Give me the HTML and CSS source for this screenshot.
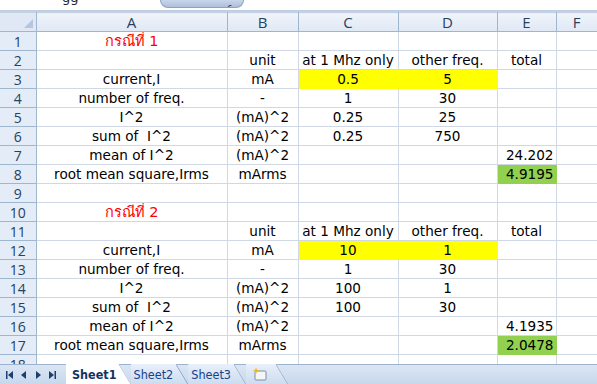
FILE: index.html
```html
<!DOCTYPE html>
<html lang="th">
<head>
    <meta charset="UTF-8">
    <title>Irms</title>
    <link rel="stylesheet" href="styles.css">
</head>
<body>
<div class="window">
    <div class="formula-bar">
        <div class="name-box"><span class="name-text">gg</span></div>
        <div class="fx-button"><span class="fx">fx</span></div>
    </div>
    <div class="sheet">
        <table class="grid">
            <colgroup>
                <col class="c-head"><col class="c-a"><col class="c-b"><col class="c-c"><col class="c-d"><col class="c-e"><col class="c-f">
            </colgroup>
            <thead>
                <tr>
                    <th class="corner"><span class="tri"></span></th>
                    <th>A</th><th>B</th><th>C</th><th>D</th><th>E</th><th>F</th>
                </tr>
            </thead>
            <tbody>
                <tr><th>1</th><td class="case">กรณีที่ 1</td><td></td><td></td><td></td><td></td><td></td></tr>
                <tr><th>2</th><td></td><td>unit</td><td>at 1 Mhz only</td><td>other freq.</td><td>total</td><td></td></tr>
                <tr><th>3</th><td>current,I</td><td>mA</td><td class="yellow">0.5</td><td class="yellow">5</td><td></td><td></td></tr>
                <tr><th>4</th><td>number of freq.</td><td>-</td><td>1</td><td>30</td><td></td><td></td></tr>
                <tr><th>5</th><td>I^2</td><td>(mA)^2</td><td>0.25</td><td>25</td><td></td><td></td></tr>
                <tr><th>6</th><td>sum of &nbsp;I^2</td><td>(mA)^2</td><td>0.25</td><td>750</td><td></td><td></td></tr>
                <tr><th>7</th><td>mean of I^2</td><td>(mA)^2</td><td></td><td></td><td class="num">24.202</td><td></td></tr>
                <tr><th>8</th><td>root mean square,Irms</td><td>mArms</td><td></td><td></td><td class="num green">4.9195</td><td></td></tr>
                <tr><th>9</th><td></td><td></td><td></td><td></td><td></td><td></td></tr>
                <tr><th>10</th><td class="case">กรณีที่ 2</td><td></td><td></td><td></td><td></td><td></td></tr>
                <tr><th>11</th><td></td><td>unit</td><td>at 1 Mhz only</td><td>other freq.</td><td>total</td><td></td></tr>
                <tr><th>12</th><td>current,I</td><td>mA</td><td class="yellow">10</td><td class="yellow">1</td><td></td><td></td></tr>
                <tr><th>13</th><td>number of freq.</td><td>-</td><td>1</td><td>30</td><td></td><td></td></tr>
                <tr><th>14</th><td>I^2</td><td>(mA)^2</td><td>100</td><td>1</td><td></td><td></td></tr>
                <tr><th>15</th><td>sum of &nbsp;I^2</td><td>(mA)^2</td><td>100</td><td>30</td><td></td><td></td></tr>
                <tr><th>16</th><td>mean of I^2</td><td>(mA)^2</td><td></td><td></td><td class="num">4.1935</td><td></td></tr>
                <tr><th>17</th><td>root mean square,Irms</td><td>mArms</td><td></td><td></td><td class="num green">2.0478</td><td></td></tr>
                <tr><th>18</th><td></td><td></td><td></td><td></td><td></td><td></td></tr>
            </tbody>
        </table>
    </div>
    <div class="tab-bar">
        <div class="nav">
            <svg width="66" height="20" viewBox="0 0 66 20">
                <rect x="6" y="6" width="1.5" height="8" fill="#1d3f6e"/>
                <path d="M13 6 L8 10 L13 14 Z" fill="#1d3f6e"/>
                <path d="M26 6 L21 10 L26 14 Z" fill="#1d3f6e"/>
                <path d="M36 6 L41 10 L36 14 Z" fill="#1d3f6e"/>
                <path d="M49 6 L54 10 L49 14 Z" fill="#1d3f6e"/>
                <rect x="54.5" y="6" width="1.5" height="8" fill="#1d3f6e"/>
            </svg>
        </div>
        <div class="tabs">
            <div class="tab active"><span>Sheet1</span></div>
            <div class="tab"><span>Sheet2</span></div>
            <div class="tab"><span>Sheet3</span></div>
            <div class="tab insert">
                <svg width="18" height="14" viewBox="0 0 18 14">
                    <rect x="5" y="4" width="11" height="9" rx="1" fill="#f4f6f9" stroke="#7d8ea6"/>
                    <path d="M5 3 L6 0.5 L7 3 L9.5 3.5 L7 4.5 L6 7 L5 4.5 L2.5 3.5 Z" fill="#f2b51c"/>
                </svg>
            </div>
        </div>
    </div>
</div>
</body>
</html>
```

FILE: styles.css
```css
body {
    margin: 0;
    background: #fff;
    font-family: "DejaVu Sans", "Noto Sans", sans-serif;
}

.window {
    width: 597px;
    height: 384px;
    overflow: hidden;
    display: flex;
    flex-direction: column;
}

.formula-bar {
    height: 10px;
    flex: none;
    display: flex;
    background: #fff;
    border-bottom: 2px solid #c2cfe0;
}

.name-box {
    width: 160px;
    overflow: hidden;
}

.name-text {
    display: block;
    margin: -9px 0 0 62px;
    font-size: 13px;
    line-height: 14px;
    color: #222;
}

.fx-button {
    width: 82px;
    height: 7px;
    overflow: hidden;
    background: linear-gradient(#c7d6ea, #aebfd8);
    border: 1px solid #8aa2c4;
    border-top: none;
    border-radius: 0 0 10px 10px;
    text-align: right;
}

.fx {
    display: inline-block;
    margin: -8px 6px 0 0;
    font-size: 12px;
    font-style: italic;
    color: #3a4b66;
}

.sheet {
    height: 352px;
    flex: none;
    overflow: hidden;
}

.grid {
    border-collapse: collapse;
    table-layout: fixed;
    width: 597px;
    font-size: 13.6px;
}

.c-head { width: 36px; }
.c-a { width: 191px; }
.c-b { width: 71px; }
.c-c { width: 100px; }
.c-d { width: 99px; }
.c-e { width: 59px; }
.c-f { width: 41px; }

.grid th {
    height: 18px;
    padding: 0;
    font-family: "Open Sans", "Liberation Sans", sans-serif;
    font-weight: normal;
    font-size: 14px;
    line-height: 17px;
    color: #27415f;
    background: linear-gradient(#f0f4fa, #dfe8f4);
    border: 1px solid #9eb6ce;
    border-top-color: #c5d3e5;
}

.grid thead th {
    height: 18px;
    font-size: 15px;
    border-left-color: #c5d3e5;
}

.grid tbody th {
    background: #e4ecf7;
    border-left: none;
    border-top: none;
    border-bottom-color: #9eb6ce;
}

.grid thead th.corner {
    position: relative;
    background: #dfe8f4;
    border-left: none;
}

.tri {
    position: absolute;
    right: 3px;
    bottom: 3px;
    width: 0;
    height: 0;
    border-left: 9px solid transparent;
    border-bottom: 9px solid #b4c6dd;
}

.grid td {
    height: 18px;
    padding: 0 2px;
    border: 1px solid #d0d7e5;
    text-align: center;
    vertical-align: bottom;
    line-height: 17px;
    white-space: nowrap;
    overflow: hidden;
    color: #000;
}

.grid td.case {
    color: #ff0000;
    font-size: 14.5px;
}

.grid td.num {
    text-align: right;
}

.grid td.yellow {
    background: #ffff00;
    border-color: #ffff00;
}

.grid td.green {
    background: #92d050;
    border-color: #92d050;
}

.tab-bar {
    flex: 1;
    display: flex;
    background: linear-gradient(#dbe6f4, #c6d7ec);
    border-top: 1px solid #9db2cf;
}

.nav {
    width: 66px;
    flex: none;
}

.nav svg {
    display: block;
}

.tabs {
    display: flex;
    margin-top: -1px;
}

.tab {
    height: 20px;
    padding: 0 15px 0 3px;
    display: flex;
    align-items: center;
    font-family: "DejaVu Sans Condensed", "DejaVu Sans", sans-serif;
    font-size: 12.5px;
    color: #15428b;
    background:
        linear-gradient(to top right, transparent calc(50% - 1px), #7f98bd 50%, transparent calc(50% + 1px)) right / 12px 100% no-repeat,
        linear-gradient(#e8f0fa, #cddcef);
    clip-path: polygon(0 0, calc(100% - 12px) 0, 100% 100%, 0 100%);
}

.tab.active {
    background:
        linear-gradient(to top right, transparent calc(50% - 1px), #7f98bd 50%, transparent calc(50% + 1px)) right / 12px 100% no-repeat,
        #fff;
    font-weight: bold;
    color: #15325f;
    padding-left: 6px;
    padding-right: 14px;
}

.tab.insert {
    padding: 0 20px 0 4px;
}
```
